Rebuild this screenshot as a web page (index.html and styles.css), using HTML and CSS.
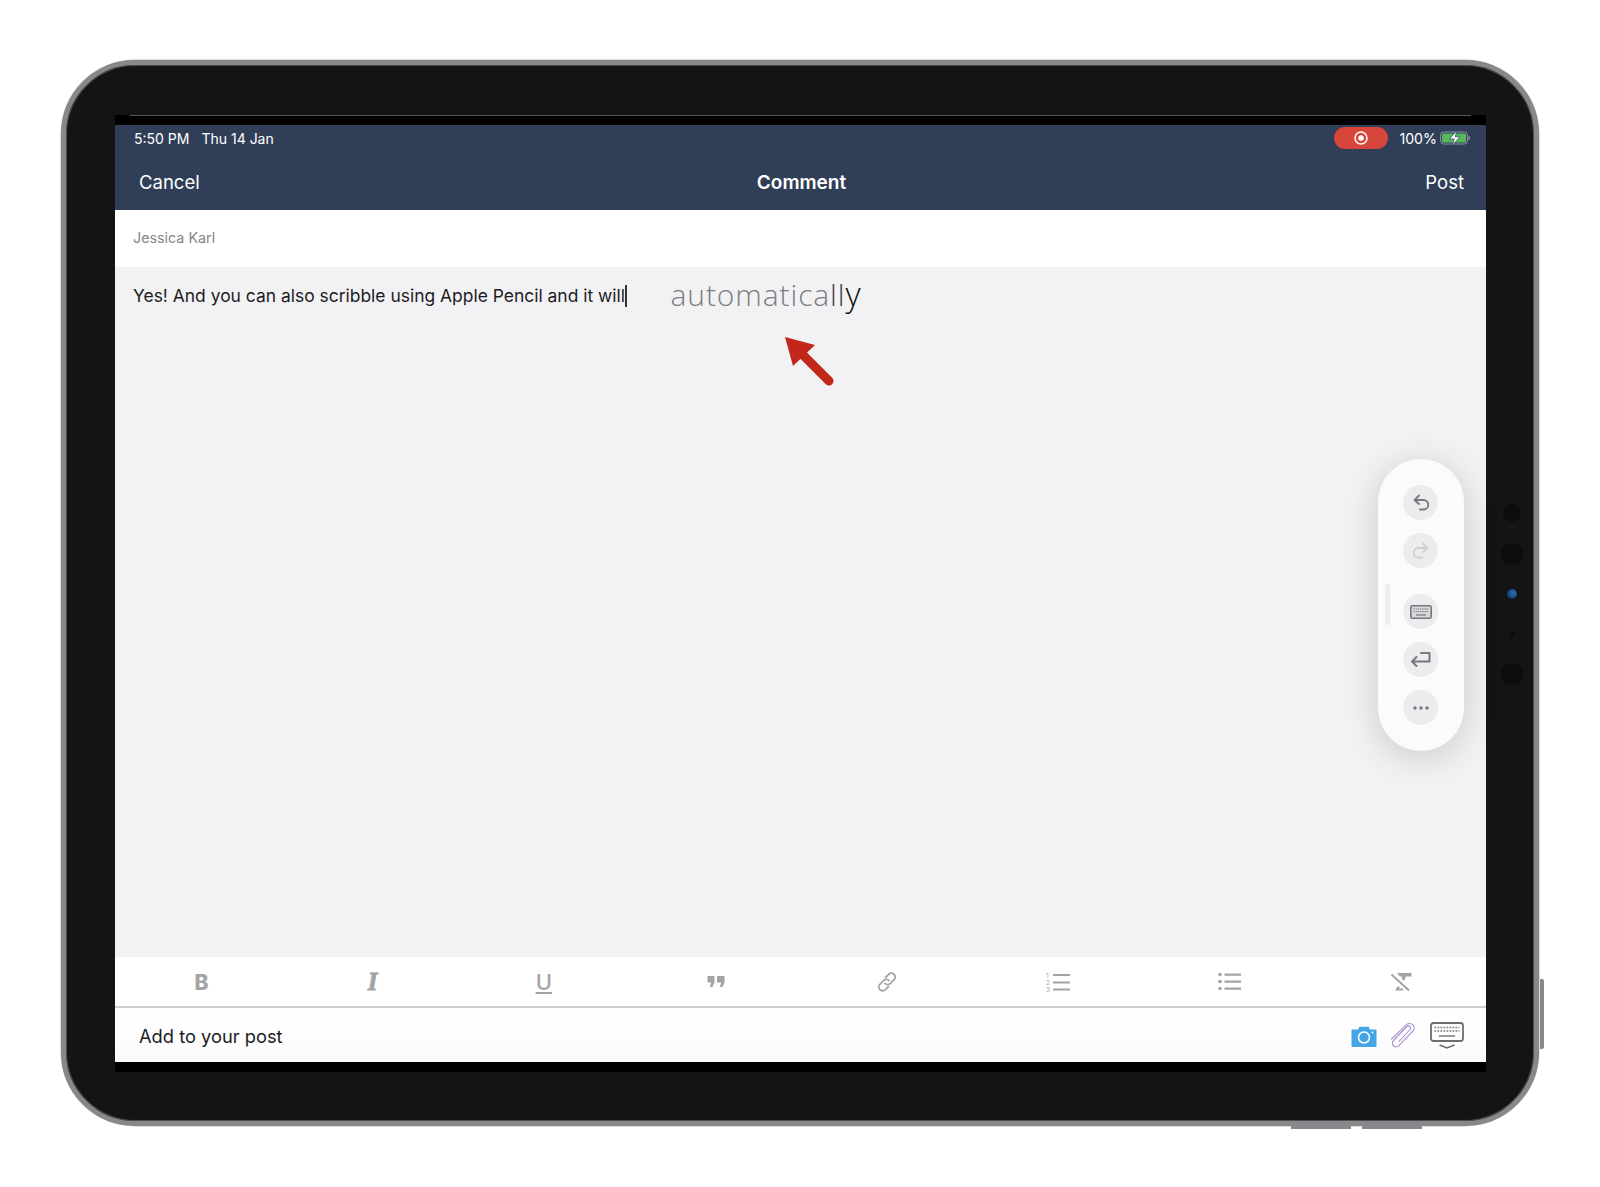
FILE: index.html
```html
<!DOCTYPE html>
<html lang="en">
<head>
<meta charset="utf-8">
<title>Comment</title>
<link rel="stylesheet" href="styles.css">
</head>
<body>
<div class="device">
  <span class="side-btn"></span>
  <span class="bottom-btn bottom-btn-a"></span>
  <span class="bottom-btn bottom-btn-b"></span>
  <span class="sensor s1"></span>
  <span class="sensor s2"></span>
  <span class="sensor s3"></span>
  <span class="sensor s4"></span>
  <span class="sensor s5"></span>
  <main class="screen">
    <header class="appbar">
      <div class="status">
        <div class="status-left"><span>5:50 PM</span><span>Thu 14 Jan</span></div>
        <div class="status-right">
          <span class="rec"><svg width="16" height="16" viewBox="0 0 16 16"><circle cx="8" cy="8" r="6" fill="none" stroke="#fff" stroke-width="1.5"/><circle cx="8" cy="8" r="2.8" fill="#fff"/></svg></span>
          <span class="batt-pct">100%</span>
          <svg class="batt" width="30" height="16" viewBox="0 0 30 16"><rect x=".6" y="2" width="26.8" height="12" rx="3" fill="none" stroke="#8b96a5"/><rect x="2" y="3.400" width="24" height="9.200" rx="1.600" fill="#54b95f"/><rect x="28.400" y="6" width="1.400" height="4" rx=".7" fill="#8b96a5"/><path d="M17 .5 9.500 9h4.800L12 15.500 20 6.800h-4.800z" fill="#fff" stroke="#303f57" stroke-width=".7"/></svg>
        </div>
      </div>
      <nav class="navrow">
        <span>Cancel</span>
        <strong class="nav-title">Comment</strong>
        <span>Post</span>
      </nav>
    </header>
    <div class="author">Jessica Karl</div>
    <section class="editor">
      <p class="line"><span class="typed">Yes! And you can also scribble using Apple Pencil and it will</span><span class="caret"></span><span class="ink">automatica<span class="ink-mid">ll</span><span class="ink-end">y</span></span></p>
      <svg class="arrow" width="60" height="60" viewBox="0 0 60 60"><path d="M24 23 52 51" fill="none" stroke="#c1271a" stroke-width="9" stroke-linecap="round"/><path d="M8 7 38 15 16 36z" fill="#c1271a"/></svg>
      <aside class="pencil-bar">
        <span class="handle"></span>
        <span class="tool"><svg width="20" height="20" viewBox="0 0 20 20" fill="none" stroke="#77777c" stroke-width="1.800" stroke-linecap="round" stroke-linejoin="round"><path d="M8 2.500 3.500 7 8 11M4 7h8.500a3.800 3.800 0 0 1 0 9.500H9"/></svg></span>
        <span class="tool"><svg width="20" height="20" viewBox="0 0 20 20" fill="none" stroke="#cfcfd2" stroke-width="1.800" stroke-linecap="round" stroke-linejoin="round"><path d="M12 2.500 16.500 7 12 11M16 7H7.500a3.800 3.800 0 0 0 0 9.500H11"/></svg></span>
        <span class="tool tool-split"><svg width="22" height="16" viewBox="0 0 22 16" fill="none"><rect x=".8" y="1.800" width="20.400" height="12.400" rx="1.500" fill="#d8d8da" stroke="#77777c" stroke-width="1.600"/><path d="M3.500 5h15M3.500 7.500h15" stroke="#77777c" stroke-dasharray="1.300 .9"/><path d="M6 11h10" stroke="#77777c" stroke-width="1.200"/></svg></span>
        <span class="tool"><svg width="22" height="18" viewBox="0 0 22 18" fill="none" stroke="#77777c" stroke-width="2" stroke-linecap="round" stroke-linejoin="round"><path d="M11 2h8.500v8.500H2M6.500 6 2 10.500 6.500 15"/></svg></span>
        <span class="tool"><svg width="18" height="4" viewBox="0 0 18 4" fill="#77777c"><circle cx="3" cy="2" r="1.700"/><circle cx="9" cy="2" r="1.700"/><circle cx="15" cy="2" r="1.700"/></svg></span>
      </aside>
    </section>
    <div class="format">
      <span class="fmt fmt-b">B</span>
      <span class="fmt fmt-i">I</span>
      <span class="fmt fmt-u">U</span>
      <span class="fmt"><svg width="18" height="16" viewBox="0 0 18 16" fill="#a4a4a4"><path d="M.5 2h7v6.500L5.500 13H2.800l1.400-4.500H.5zM10 2h7.500v6.500L15.500 13h-2.700l1.400-4.500H10z"/></svg></span>
      <span class="fmt"><svg width="22" height="22" viewBox="0 0 22 22" fill="none" stroke="#a4a4a4" stroke-width="1.800" stroke-linecap="round"><path d="M9.500 6.500 12.700 3.300a3.800 3.800 0 0 1 5.400 5.400l-3.700 3.700a3.800 3.800 0 0 1-5.400 0"/><path d="M12.500 15.500 9.300 18.700a3.800 3.800 0 0 1-5.400-5.400l3.700-3.700a3.800 3.800 0 0 1 5.400 0"/></svg></span>
      <span class="fmt"><svg width="24" height="22" viewBox="0 0 24 22"><text x="0" y="6.500" class="num">1</text><text x="0" y="13.500" class="num">2</text><text x="0" y="21" class="num">3</text><path d="M7 4h17M7 11.500h17M7 18.500h17" stroke="#a4a4a4" stroke-width="2.200"/></svg></span>
      <span class="fmt"><svg width="23" height="19" viewBox="0 0 23 19" fill="#a4a4a4"><circle cx="2" cy="2.500" r="1.800"/><circle cx="2" cy="9.500" r="1.800"/><circle cx="2" cy="16.500" r="1.800"/><path d="M6.500 1.500H23v2.200H6.500zM6.500 8.500H23v2.200H6.500zM6.500 15.500H23v2.200H6.500z"/></svg></span>
      <span class="fmt fmt-clear"><svg width="22" height="20" viewBox="0 0 22 20" fill="#a4a4a4"><path d="M7 1h14.500v3.500H16L14 9l-2.500-2.500.8-2H9.800zM7.500 14.500h2.300L9 16.500l4 .1v1.900H5z"/><path d="M1.500 2.500 19 18.500" stroke="#a4a4a4" stroke-width="2"/></svg></span>
    </div>
    <footer class="addbar">
      <span class="add-label">Add to your post</span>
      <div class="add-icons">
        <svg width="26" height="21" viewBox="0 0 26 21"><path d="M1.500 3.500h5.500L8.500.7h9L19 3.500h5.500a1 1 0 0 1 1 1V20a1 1 0 0 1-1 1h-23a1 1 0 0 1-1-1V4.500a1 1 0 0 1 1-1z" fill="#43a5e6"/><circle cx="13" cy="11.500" r="5.500" fill="none" stroke="#fff" stroke-width="1.500"/><circle cx="21.500" cy="6.500" r="1" fill="#fff"/></svg>
        <svg class="clip" width="26" height="25" viewBox="0 0 26 25" fill="none" stroke="#a98fd3" stroke-width="1.100" stroke-linecap="round"><path d="M10 18.500 21 6.500a2.200 2.200 0 0 0-3.200-3L4.500 17.500a3.700 3.700 0 0 0 5.300 5.200L24 8a4.500 4.500 0 0 0-6.400-6.300L2.500 16"/></svg>
        <svg width="34" height="28" viewBox="0 0 34 28" fill="none"><rect x="1" y="1" width="32" height="18" rx="2.500" stroke="#6d6d70" stroke-width="1.800"/><path d="M4.500 5.500h25M4.500 9h25" stroke="#77777a" stroke-width="1.700" stroke-dasharray="1.700 1.300"/><path d="M9 14h16" stroke="#77777a" stroke-width="1.500"/><path d="M9.500 23 17 26l7.500-3" stroke="#6d6d70" stroke-width="1.600"/></svg>
      </div>
    </footer>
  </main>
</div>
</body>
</html>
```

FILE: styles.css
```css
* { box-sizing: border-box; }
html, body { margin: 0; height: 100%; background: #fff; }
body {
  padding: 60px 0 0 61px;
  font-family: Inter, "Liberation Sans", sans-serif;
  color: #1c1c1e;
}
.device {
  position: relative;
  width: 1478px;
  height: 1066px;
  padding: 50px 48px 49px 49px;
  background: #141414;
  border: 5px solid #88888b;
  border-radius: 74px;
  box-shadow: inset 0 0 0 1px #4c4c4f, 0 0 0 .5px #c0c0c2;
}
.side-btn {
  position: absolute;
  right: -10px;
  top: 914px;
  width: 4px;
  height: 70px;
  background: #88888c;
  border-radius: 0 2px 2px 0;
}
.bottom-btn {
  position: absolute;
  bottom: -8px;
  width: 60px;
  height: 3px;
  background: #88888c;
}
.bottom-btn-a { left: 1225px; }
.bottom-btn-b { left: 1296px; }
.sensor {
  position: absolute;
  left: 1437px;
  width: 18px;
  height: 18px;
  border-radius: 50%;
  background: #0d0d0d;
}
.s1 { top: 439px; }
.s2 { top: 478px; left: 1435px; width: 22px; height: 22px; }
.s3 { top: 524px; left: 1441px; width: 10px; height: 10px; background: radial-gradient(circle at 60% 40%, #2a72c4, #14325f 80%); }
.s4 { top: 567px; left: 1444px; width: 5px; height: 5px; }
.s5 { top: 598px; left: 1435px; width: 22px; height: 22px; }

.screen {
  width: 1371px;
  height: 957px;
  display: flex;
  flex-direction: column;
  background: #fff;
  border-top: 10px solid #000;
  border-bottom: 10px solid #000;
  position: relative;
}
.screen::before {
  content: "";
  position: absolute;
  left: 15px;
  right: 15px;
  top: -10px;
  height: 1px;
  background: #55555a;
}
.appbar {
  height: 85px;
  flex: none;
  background: #303f57;
  color: #fff;
}
.status {
  height: 28px;
  display: flex;
  justify-content: space-between;
  align-items: center;
  padding: 0 16px 2px 19px;
  font-size: 14px;
}
.status-left { display: flex; gap: 12px; }
.status-right { display: flex; align-items: center; }
.rec {
  width: 54px;
  height: 22px;
  border-radius: 11px;
  background: #d8453a;
  display: flex;
  align-items: center;
  justify-content: center;
  margin-right: 11px;
}
.batt-pct { font-size: 14.200px; margin-right: 3px; }
.batt { display: block; }
.navrow {
  height: 57px;
  display: flex;
  justify-content: space-between;
  align-items: center;
  padding: 1px 22px 0 24px;
  font-size: 18.500px;
  position: relative;
}
.nav-title {
  position: absolute;
  left: 2px;
  right: 0;
  top: 18px;
  text-align: center;
  font-size: 19px;
  font-weight: 600;
  pointer-events: none;
}
.author {
  height: 57px;
  flex: none;
  display: flex;
  align-items: center;
  padding-left: 18px;
  padding-bottom: 2px;
  font-size: 14.300px;
  color: #85858a;
}
.editor {
  flex: 1;
  background: #f2f2f5;
  position: relative;
}
.line {
  margin: 0;
  padding: 14px 0 0 18px;
  height: 58px;
  display: flex;
  align-items: flex-start;
  font-size: 17.450px;
  line-height: 30px;
  color: #1c1c1e;
}
.caret {
  width: 1.500px;
  height: 22px;
  margin: 4px 0 0 0;
  background: #333;
  flex: none;
}
.ink {
  margin-left: 44px;
  margin-top: -2px;
  font-family: "Open Sans", sans-serif;
  font-weight: 300;
  font-size: 30px;
  line-height: 30px;
  letter-spacing: .9px;
  color: #7c7c80;
  white-space: nowrap;
}
.ink-mid { color: #47474a; }
.ink-end { color: #111; font-size: 33px; }
.arrow {
  position: absolute;
  left: 662px;
  top: 63px;
}
.pencil-bar {
  position: absolute;
  right: 22px;
  top: 192px;
  width: 86px;
  height: 292px;
  padding: 26px 1px 0 0;
  border-radius: 43px;
  background: #fbfafc;
  box-shadow: 0 6px 34px rgba(0, 0, 0, .17);
  display: flex;
  flex-direction: column;
  align-items: center;
  gap: 13px;
}
.handle {
  position: absolute;
  left: 7px;
  top: 125px;
  width: 5px;
  height: 41px;
  border-radius: 2.500px;
  background: #ececee;
}
.tool {
  width: 35px;
  height: 35px;
  flex: none;
  border-radius: 50%;
  background: #ececee;
  display: flex;
  align-items: center;
  justify-content: center;
}
.tool-split { margin-top: 13px; }
.format {
  height: 49px;
  flex: none;
  display: grid;
  grid-template-columns: repeat(8, 1fr);
  align-items: center;
  padding-left: 2px;
  background: #fff;
}
.fmt {
  display: flex;
  align-items: center;
  justify-content: center;
  color: #a4a4a4;
  font-size: 21px;
  line-height: 1;
}
.fmt-b { font-weight: 800; padding: 2px 2px 0 0; }
.fmt-i {
  font-family: "Liberation Serif", serif;
  font-weight: 700;
  font-style: italic;
  font-size: 25px;
  padding-right: 2px;
  -webkit-text-stroke: .8px #a4a4a4;
}
.fmt-u {
  font-weight: 500;
  font-size: 22px;
  padding-right: 2px;
  text-decoration: underline;
  text-underline-offset: 2px;
  text-decoration-thickness: 2px;
}
.fmt-clear { padding-left: 2px; }
.num {
  font-family: Inter, sans-serif;
  font-size: 6.500px;
  fill: #a4a4a4;
}
.addbar {
  height: 56px;
  flex: none;
  border-top: 2px solid #cfcfcf;
  background: linear-gradient(#fff, #fbfbfc);
  display: flex;
  align-items: center;
  justify-content: space-between;
  padding: 2px 22px 0 24px;
}
.add-label { font-size: 18.300px; }
.add-icons {
  display: flex;
  align-items: center;
  gap: 12px;
  margin-top: 0;
}
.add-icons svg { display: block; }
.clip { margin: -2px 3px 0 0; }
```
